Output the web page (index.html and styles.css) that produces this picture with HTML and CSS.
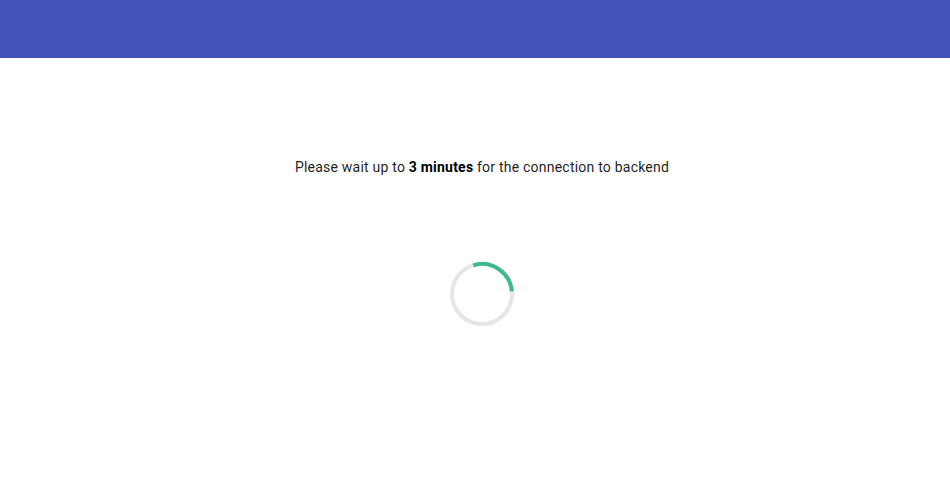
FILE: index.html
```html
<!DOCTYPE html>
<html>
<head>
<meta charset="utf-8">
<link rel="stylesheet" href="styles.css">
</head>
<body>
<header class="topbar"></header>
<main class="content">
  <p class="message">Please wait up to <strong>3 minutes</strong> for the connection to backend</p>
  <div class="spinner">
    <svg width="66" height="66" viewBox="0 0 66 66">
      <circle cx="33" cy="33" r="30" fill="none" stroke="#e6e6e6" stroke-width="4"/>
      <path d="M 24.2 4.3 A 30 30 0 0 1 62.9 30.4" fill="none" stroke="#3dba8c" stroke-width="4"/>
    </svg>
  </div>
</main>
</body>
</html>
```
FILE: styles.css
```css
html, body {
  margin: 0;
  padding: 0;
  background: #ffffff;
  font-family: Roboto, "Liberation Sans", sans-serif;
}
.topbar {
  height: 58px;
  background: #4453b7;
}
.content {
  display: flex;
  flex-direction: column;
  align-items: center;
  padding-top: 100px;
  padding-left: 14px;
}
.message {
  margin: 0;
  font-size: 14px;
  line-height: 18px;
  color: #1f1f1f;
  letter-spacing: 0.22px;
}
.message strong {
  font-weight: 700;
  color: #000;
}
.spinner {
  margin-top: 85px;
  width: 66px;
  height: 66px;
}
.spinner svg {
  display: block;
}
```
